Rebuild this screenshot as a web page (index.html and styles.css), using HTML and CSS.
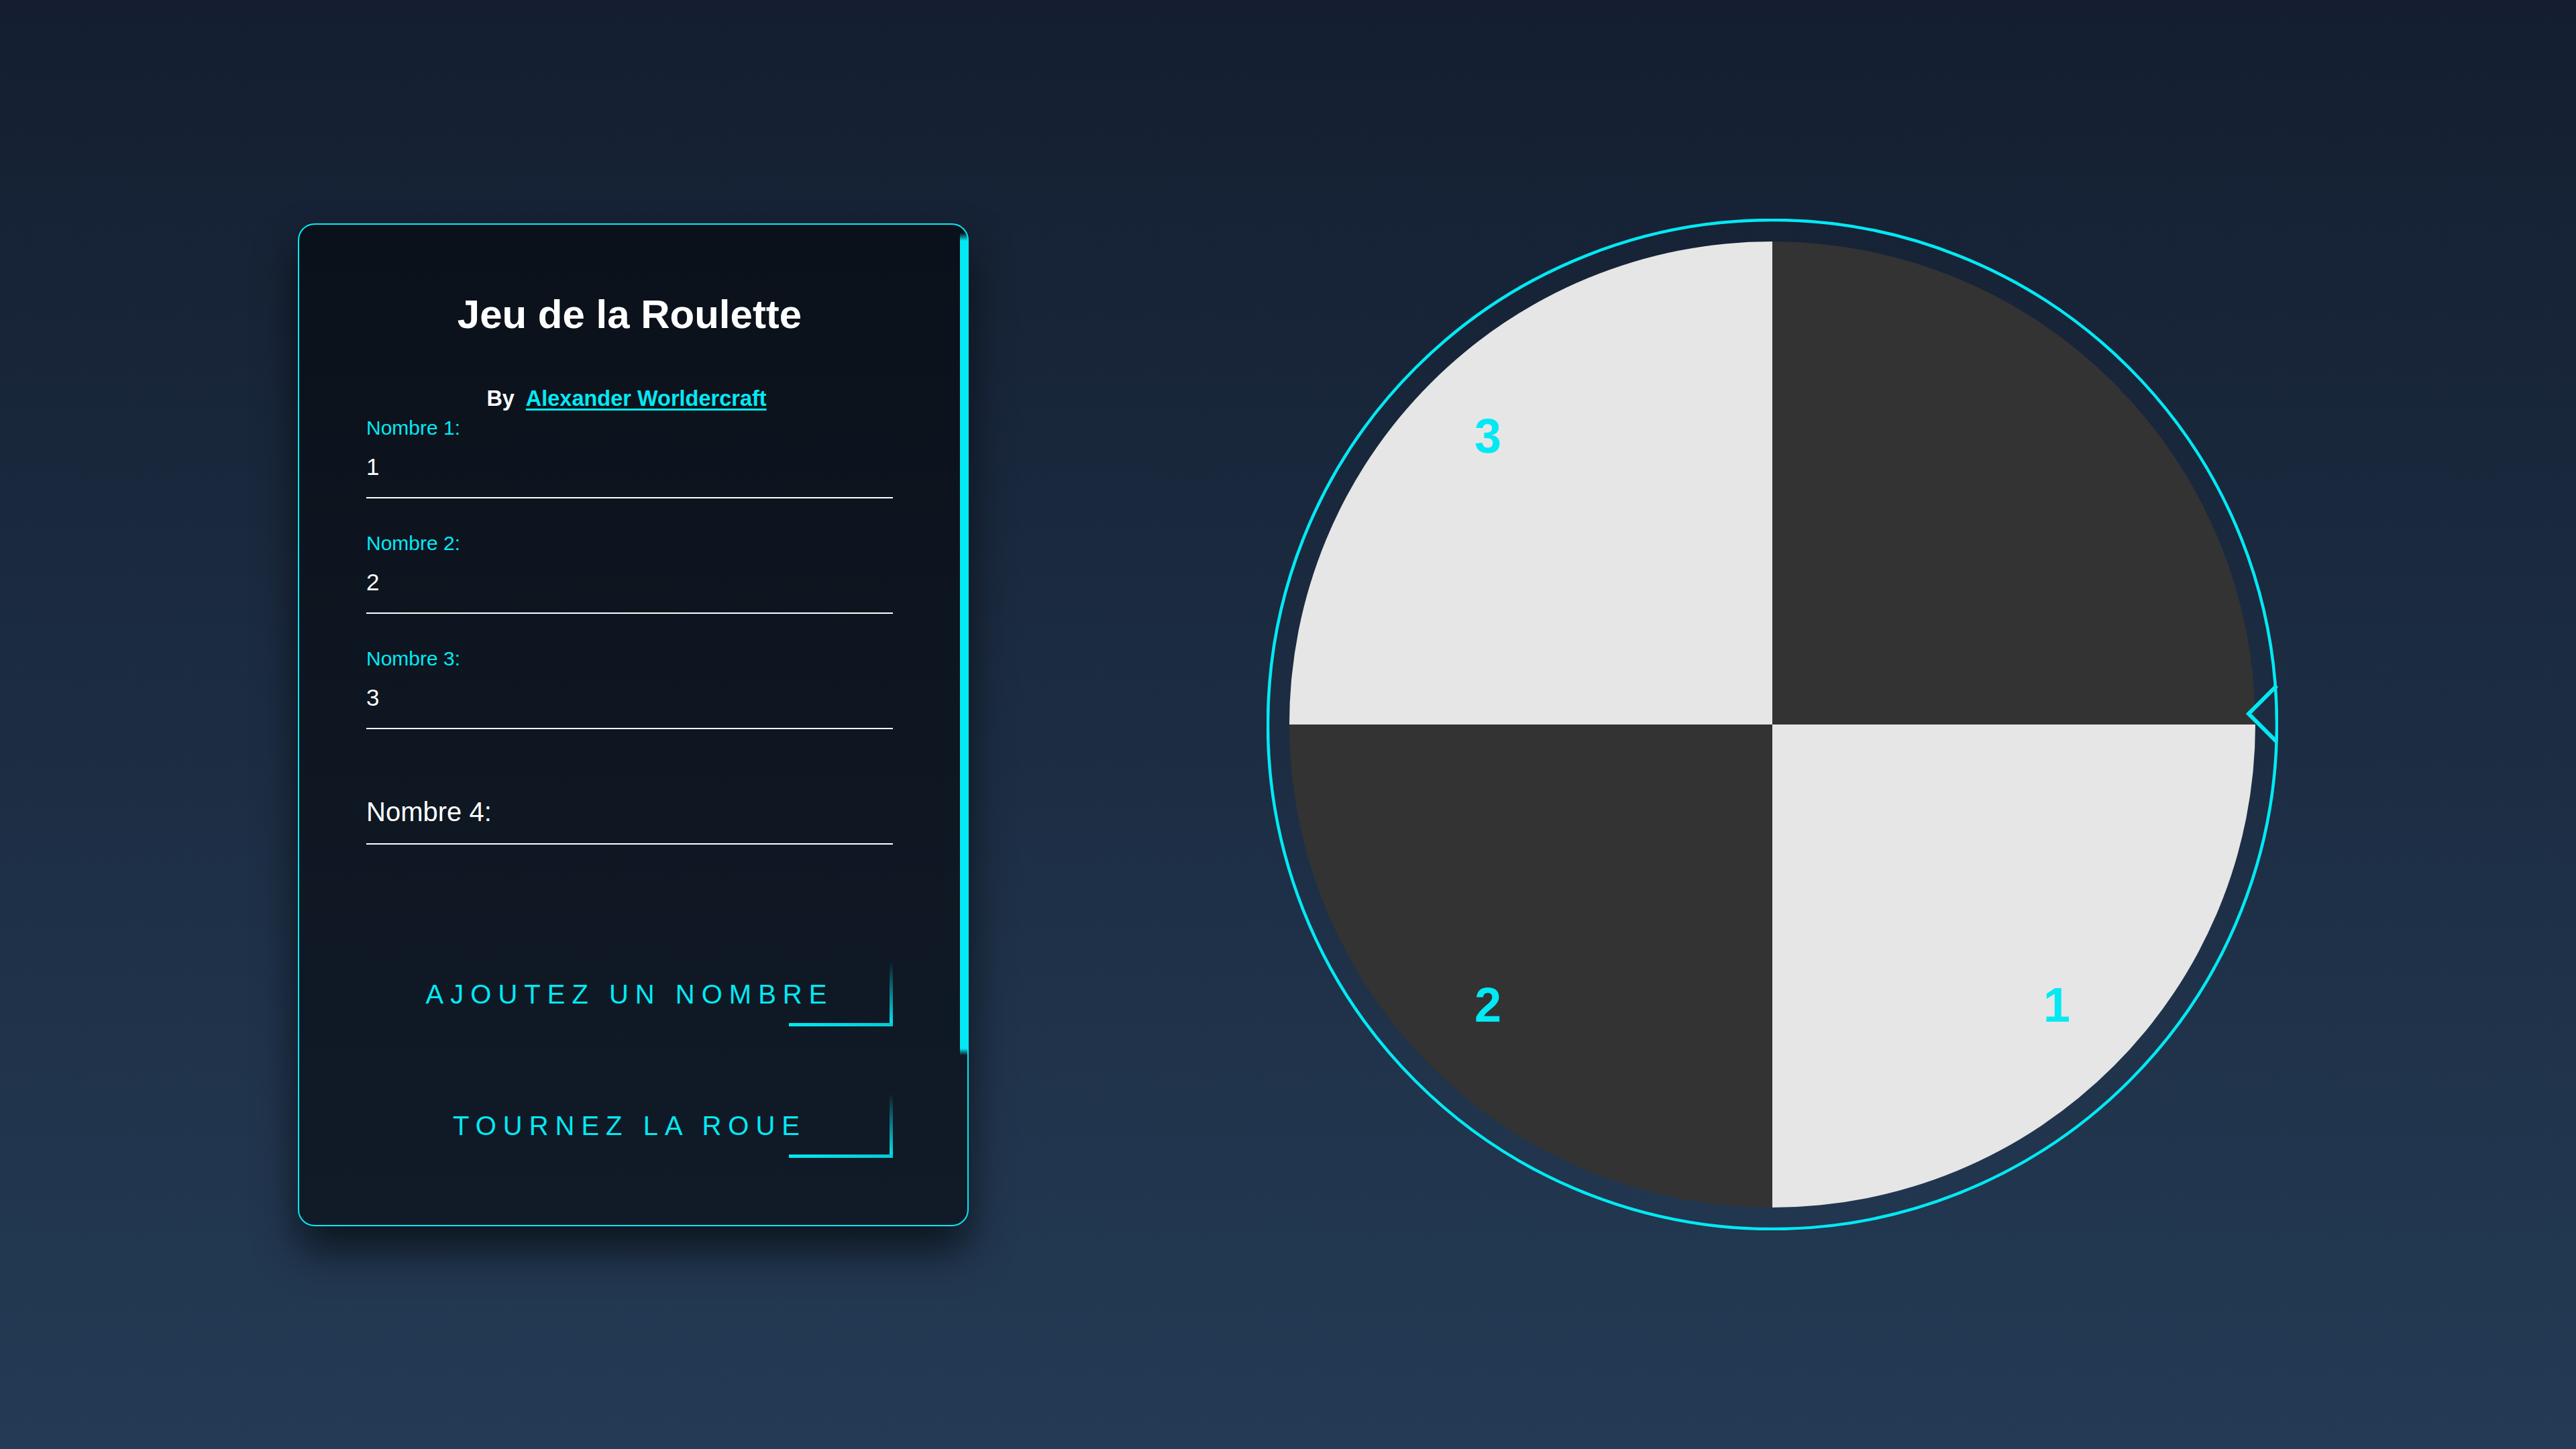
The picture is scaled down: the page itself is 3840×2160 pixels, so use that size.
FILE: index.html
```html
<!DOCTYPE html>
<html lang="fr">
<head>
<meta charset="utf-8">
<title>Jeu de la Roulette</title>
<link rel="stylesheet" href="styles.css">
</head>
<body>
<main class="page">
  <section class="card">
    <span class="card-bar"></span>
    <h2 class="title">Jeu de la Roulette</h2>
    <p class="byline">By&nbsp; <a class="author" href="#">Alexander Worldercraft</a></p>
    <div class="field">
      <input class="field-input" type="text" value="1">
      <label class="field-label is-floated">Nombre 1:</label>
    </div>
    <div class="field">
      <input class="field-input" type="text" value="2">
      <label class="field-label is-floated">Nombre 2:</label>
    </div>
    <div class="field">
      <input class="field-input" type="text" value="3">
      <label class="field-label is-floated">Nombre 3:</label>
    </div>
    <div class="field">
      <input class="field-input" type="text" value="">
      <label class="field-label">Nombre 4:</label>
    </div>
    <a class="action" href="#">Ajoutez un nombre<span class="edge-right"></span><span class="edge-bottom"></span></a>
    <a class="action" href="#">Tournez la roue<span class="edge-right"></span><span class="edge-bottom"></span></a>
  </section>
  <div class="wheel">
    <svg class="wheel-svg" viewBox="0 0 1508 1508" width="1508" height="1508">
      <path class="seg-light" d="M754 754 L34 754 A720 720 0 0 1 754 34 Z"/>
      <path class="seg-dark" d="M754 754 L754 34 A720 720 0 0 1 1474 754 Z"/>
      <path class="seg-light" d="M754 754 L1474 754 A720 720 0 0 1 754 1474 Z"/>
      <path class="seg-dark" d="M754 754 L754 1474 A720 720 0 0 1 34 754 Z"/>
      <text class="wheel-num" x="330" y="349">3</text>
      <text class="wheel-num" x="330" y="1197">2</text>
      <text class="wheel-num" x="1178" y="1197">1</text>
      <circle class="wheel-ring" cx="754" cy="754" r="752"/>
      <polyline class="wheel-pointer" points="1506,696 1464,738 1506,780"/>
    </svg>
  </div>
</main>
</body>
</html>
```

FILE: styles.css
```css
html, body {
  margin: 0;
  padding: 0;
}

body {
  background: linear-gradient(#141e30, #243b55);
  font-family: "Liberation Sans", Arial, sans-serif;
  min-height: 2160px;
}

.page {
  height: 2160px;
  display: flex;
  justify-content: space-evenly;
  align-items: center;
}

.card {
  position: relative;
  box-sizing: border-box;
  width: 1000px;
  flex: none;
  display: flex;
  flex-direction: column;
  padding: 100px 111px 100px 100px;
  border: 2px solid #03e9f4;
  border-radius: 25px;
  background: rgba(0, 0, 0, 0.5);
  box-shadow: 0 37px 62px rgba(0, 0, 0, 0.6);
}

.card-bar {
  position: absolute;
  top: 12px;
  right: -1px;
  width: 12px;
  height: 1226px;
  background: linear-gradient(180deg,
    rgba(3, 233, 244, 0) 0,
    #03e9f4 12px,
    #03e9f4 calc(100% - 10px),
    rgba(3, 233, 244, 0) 100%);
}

.title {
  margin: 0 0 75px;
  font-size: 60px;
  line-height: 68px;
  font-weight: bold;
  color: #fff;
  text-align: center;
}

.byline {
  margin: 0 0 35px;
  padding-right: 9px;
  font-size: 32.5px;
  line-height: 33px;
  font-weight: bold;
  color: #fff;
  text-align: center;
}

.author {
  color: #03e9f4;
  text-decoration: underline;
  text-decoration-thickness: 3px;
  text-underline-offset: 4px;
}

.field {
  position: relative;
  margin-bottom: 75px;
}

.field-input {
  display: block;
  box-sizing: border-box;
  width: 100%;
  margin: 0;
  padding: 30px 0 25px;
  font-family: "Liberation Sans", Arial, sans-serif;
  font-size: 35px;
  line-height: 40px;
  height: 97px;
  color: #fff;
  background: transparent;
  border: none;
  border-bottom: 2px solid #fff;
  outline: none;
}

.field-label {
  position: absolute;
  left: 0;
  top: 25px;
  font-size: 40px;
  line-height: 46px;
  color: #fff;
  pointer-events: none;
}

.field-label.is-floated {
  top: -25px;
  font-size: 30px;
  line-height: 34px;
  color: #03e9f4;
}

.action {
  position: relative;
  display: block;
  margin-top: 100px;
  padding: 25px 0;
  font-size: 40px;
  line-height: 46px;
  letter-spacing: 10px;
  text-transform: uppercase;
  text-align: center;
  color: #03e9f4;
  text-decoration: none;
  overflow: hidden;
}

.edge-right {
  position: absolute;
  right: 0;
  bottom: 0;
  width: 5px;
  height: 100%;
  background: linear-gradient(180deg, rgba(3, 233, 244, 0), #03e9f4);
}

.edge-bottom {
  position: absolute;
  right: 0;
  bottom: 0;
  width: 155px;
  height: 5px;
  background: linear-gradient(90deg, #03e9f4, #03cbd6);
}

.wheel {
  flex: none;
  width: 1508px;
  height: 1508px;
}

.wheel-svg {
  display: block;
}

.seg-light {
  fill: #e6e6e6;
}

.seg-dark {
  fill: #333333;
}

.wheel-num {
  font-family: "Liberation Sans", Arial, sans-serif;
  font-weight: bold;
  font-size: 72px;
  fill: #03e9f4;
  text-anchor: middle;
}

.wheel-ring {
  fill: none;
  stroke: #03e9f4;
  stroke-width: 4.5;
}

.wheel-pointer {
  fill: none;
  stroke: #03e9f4;
  stroke-width: 6;
  stroke-linejoin: miter;
}
```
